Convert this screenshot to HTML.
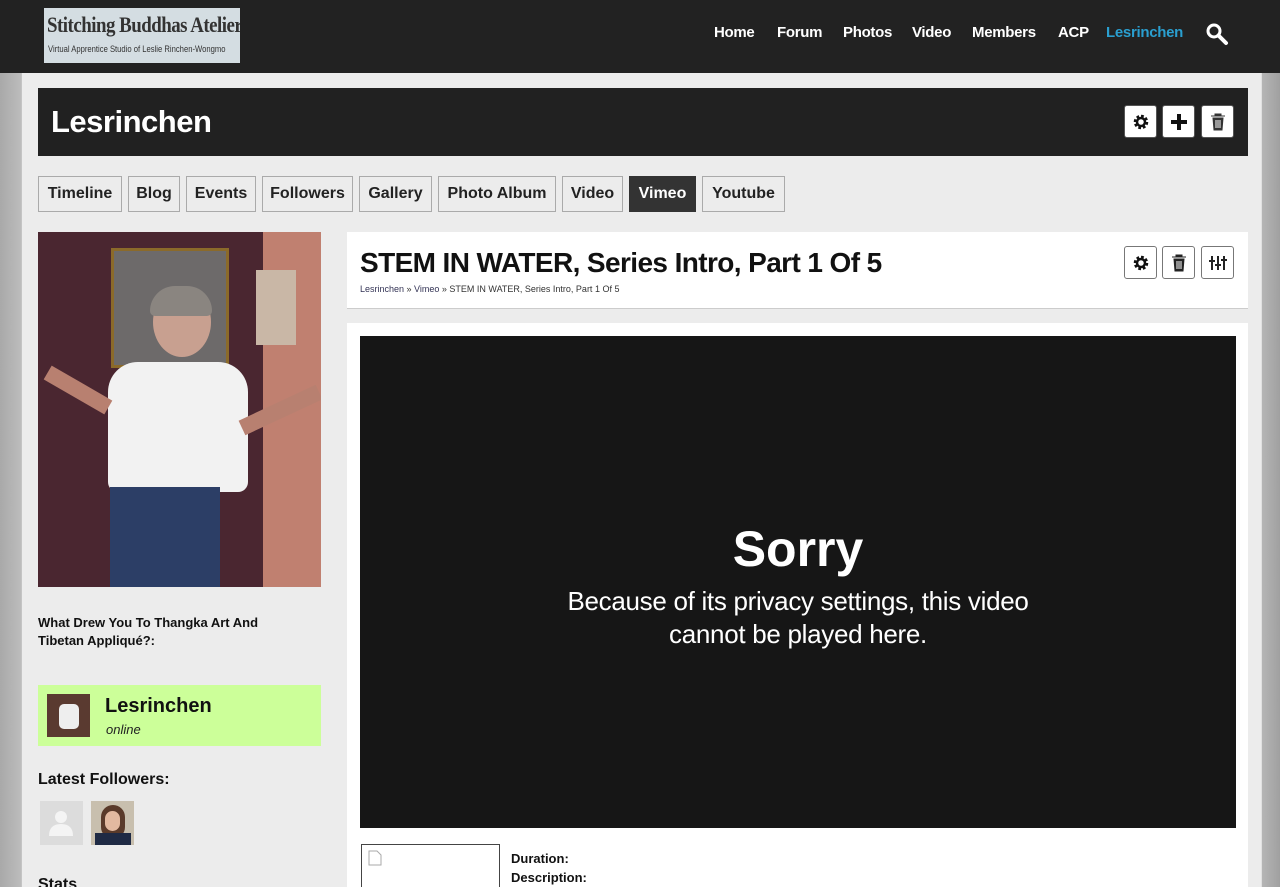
<!DOCTYPE html>
<html><head><meta charset="utf-8"><style>
*{box-sizing:border-box;margin:0;padding:0}
html,body{width:1280px;height:887px;overflow:hidden}
body{background:linear-gradient(90deg,#a9a9a9 0,#bdbdbd 22px,#ececec 22px,#ececec 1262px,#b5b5b5 1262px,#a0a0a0 1280px);font-family:"Liberation Sans",sans-serif;position:relative}
.top{position:absolute;left:0;top:0;width:1280px;height:73px;background:#222}
.logo{position:absolute;left:44px;top:8px;width:196px;height:55px;background:#d4dde2;overflow:hidden}
.logo b{position:absolute;left:3px;top:4px;font-family:"Liberation Serif",serif;font-size:22px;color:#333;letter-spacing:-0.6px;font-weight:bold;transform:scaleX(.86);transform-origin:left;white-space:nowrap}
.logo i{position:absolute;left:4px;top:36px;font-size:9px;color:#333;font-style:normal;transform:scaleX(.85);transform-origin:left;white-space:nowrap}
.nav{position:absolute;top:24px;font-size:15px;color:#fff;font-weight:bold;letter-spacing:-0.3px}
.hdr{position:absolute;left:38px;top:88px;width:1210px;height:68px;background:#212121}
.hdr h1{position:absolute;left:13px;top:16px;color:#fff;font-size:31px;letter-spacing:-0.5px}
.ib{position:absolute;width:33px;height:33px;background:#fff;border:1px solid #555;border-radius:3px;display:flex;align-items:center;justify-content:center}
.tab{position:absolute;top:176px;height:36px;border:1px solid #aaa;background:#ececec;font-weight:bold;font-size:16px;color:#222;line-height:34px;text-align:center}
.tab.on{background:#333;color:#fff;border-color:#333}
.photo{position:absolute;left:38px;top:232px;width:283px;height:355px;background:#4a2630;overflow:hidden}
.panel{position:absolute;left:347px;background:#fff}
.b{font-weight:bold;color:#111}
</style></head><body>
<div class="top">
<div class="logo"><b>Stitching Buddhas Atelier</b><i>Virtual Apprentice Studio of Leslie Rinchen-Wongmo</i></div>
<span class="nav" style="left:714px">Home</span><span class="nav" style="left:777px">Forum</span><span class="nav" style="left:843px">Photos</span><span class="nav" style="left:912px">Video</span><span class="nav" style="left:972px">Members</span><span class="nav" style="left:1058px">ACP</span><span class="nav" style="left:1106px;color:#2a9fd0">Lesrinchen</span>
<svg style="position:absolute;left:1205px;top:22px" width="24" height="24" viewBox="0 0 24 24"><circle cx="9" cy="9" r="6" fill="none" stroke="#fff" stroke-width="3"/><path d="M13.5 13.5L21 21" stroke="#fff" stroke-width="4" stroke-linecap="round"/></svg>
</div>
<div class="hdr"><h1>Lesrinchen</h1>
<div class="ib" style="left:1086px;top:17px"><svg width="18" height="18" viewBox="0 0 18 18"><circle cx="9" cy="9" r="5.5" fill="none" stroke="#111" stroke-width="3.5" stroke-dasharray="2.5 1.8"/><circle cx="9" cy="9" r="4" fill="none" stroke="#111" stroke-width="2.5"/></svg></div>
<div class="ib" style="left:1124px;top:17px"><svg width="20" height="20"><path d="M10 2v16M2 10h16" stroke="#111" stroke-width="4"/></svg></div>
<div class="ib" style="left:1163px;top:17px"><svg width="16" height="18"><path d="M1 3h14M5 3V1h6v2M3 5h10l-1 12H4z" fill="#333" stroke="#333"/><path d="M6 7v8M8 7v8M10 7v8" stroke="#fff"/></svg></div>
</div>
<div class="tab" style="left:38px;width:84px">Timeline</div>
<div class="tab" style="left:128px;width:52px">Blog</div>
<div class="tab" style="left:186px;width:70px">Events</div>
<div class="tab" style="left:262px;width:91px">Followers</div>
<div class="tab" style="left:359px;width:73px">Gallery</div>
<div class="tab" style="left:438px;width:118px">Photo Album</div>
<div class="tab" style="left:562px;width:61px">Video</div>
<div class="tab on" style="left:629px;width:67px">Vimeo</div>
<div class="tab" style="left:702px;width:83px">Youtube</div>
<div class="photo">
<div style="position:absolute;left:73px;top:16px;width:118px;height:120px;background:#6d6a6a;border:3px solid #8b6a2a"></div>
<div style="position:absolute;left:225px;top:0;width:58px;height:355px;background:#c08070"></div>
<div style="position:absolute;left:218px;top:38px;width:40px;height:75px;background:#c9b7a6"></div>
<div style="position:absolute;left:115px;top:55px;width:58px;height:70px;background:#c8a090;border-radius:50%"></div>
<div style="position:absolute;left:112px;top:54px;width:62px;height:30px;background:#8a8580;border-radius:30px 30px 6px 6px"></div>
<div style="position:absolute;left:70px;top:130px;width:140px;height:130px;background:#f2f2f2;border-radius:30px 30px 10px 10px"></div>
<div style="position:absolute;left:5px;top:150px;width:70px;height:16px;background:#b88070;transform:rotate(30deg)"></div>
<div style="position:absolute;left:200px;top:170px;width:85px;height:16px;background:#b88070;transform:rotate(-25deg)"></div>
<div style="position:absolute;left:72px;top:255px;width:110px;height:100px;background:#2c3e66"></div>
</div>
<div style="position:absolute;left:38px;top:614px;font-size:13px;line-height:18px" class="b">What Drew You To Thangka Art And<br>Tibetan Appliqué?:</div>
<div style="position:absolute;left:38px;top:685px;width:283px;height:61px;background:#ccff99">
<div style="position:absolute;left:9px;top:9px;width:43px;height:43px;background:#5a3a30"><div style="position:absolute;left:12px;top:10px;width:20px;height:25px;background:#eee;border-radius:5px"></div></div>
<div style="position:absolute;left:67px;top:10px;font-size:20px" class="b">Lesrinchen</div>
<div style="position:absolute;left:68px;top:37px;font-size:13px;font-style:italic;color:#222">online</div></div>
<div style="position:absolute;left:38px;top:771px;font-size:16px" class="b">Latest Followers:</div>
<div style="position:absolute;left:40px;top:801px;width:43px;height:44px;background:#dcdcdc"><svg width="43" height="44"><circle cx="21" cy="16" r="6" fill="#f4f4f4"/><path d="M9 35q0-12 12-12t12 12z" fill="#f4f4f4"/></svg></div>
<div style="position:absolute;left:91px;top:801px;width:43px;height:44px;background:#c8bfae"><div style="position:absolute;left:10px;top:4px;width:24px;height:34px;background:#5a3a2a;border-radius:12px"></div><div style="position:absolute;left:14px;top:10px;width:15px;height:20px;background:#e2b9a0;border-radius:8px"></div><div style="position:absolute;left:4px;top:32px;width:36px;height:12px;background:#1f2a44"></div></div>
<div style="position:absolute;left:38px;top:876px;font-size:16px" class="b">Stats</div>
<div class="panel" style="top:232px;width:901px;height:77px;border-bottom:1px solid #ccc">
<div style="position:absolute;left:13px;top:15px;font-size:28px;letter-spacing:-0.6px;white-space:nowrap" class="b">STEM IN WATER, Series Intro, Part 1 Of 5</div>
<div style="position:absolute;left:13px;top:52px;font-size:9px;color:#333"><span style="color:#335">Lesrinchen</span> » <span style="color:#335">Vimeo</span> » STEM IN WATER, Series Intro, Part 1 Of 5</div>
<div class="ib" style="left:777px;top:14px;border-color:#777"><svg width="18" height="18" viewBox="0 0 18 18"><circle cx="9" cy="9" r="5.5" fill="none" stroke="#111" stroke-width="3.5" stroke-dasharray="2.5 1.8"/><circle cx="9" cy="9" r="4" fill="none" stroke="#111" stroke-width="2.5"/></svg></div>
<div class="ib" style="left:815px;top:14px;border-color:#777"><svg width="16" height="18"><path d="M1 3h14M5 3V1h6v2M3 5h10l-1 12H4z" fill="#222" stroke="#222"/><path d="M6 7v8M8 7v8M10 7v8" stroke="#fff"/></svg></div>
<div class="ib" style="left:854px;top:14px;border-color:#777"><svg width="20" height="18"><path d="M4 2v14M10 2v14M16 2v14M1 7h6M7 11h6M13 6h6" stroke="#222" stroke-width="2"/></svg></div>
</div>
<div class="panel" style="top:323px;width:901px;height:564px">
<div style="position:absolute;left:13px;top:13px;width:876px;height:492px;background:#161616;color:#fff;text-align:center">
<div style="position:absolute;top:184px;width:100%;font-size:50px;font-weight:bold">Sorry</div>
<div style="position:absolute;top:249px;width:100%;font-size:26px;line-height:33px;letter-spacing:-0.3px">Because of its privacy settings, this video<br>cannot be played here.</div></div>
<div style="position:absolute;left:14px;top:521px;width:139px;height:50px;border:1px solid #444;border-bottom:none"><svg style="position:absolute;left:6px;top:5px" width="14" height="16"><path d="M1 1h8l4 4v10H1z" fill="#fff" stroke="#aaa"/></svg></div>
<div style="position:absolute;left:164px;top:526px;font-size:13px;line-height:19px" class="b">Duration:<br>Description:</div>
</div>
</body></html>
